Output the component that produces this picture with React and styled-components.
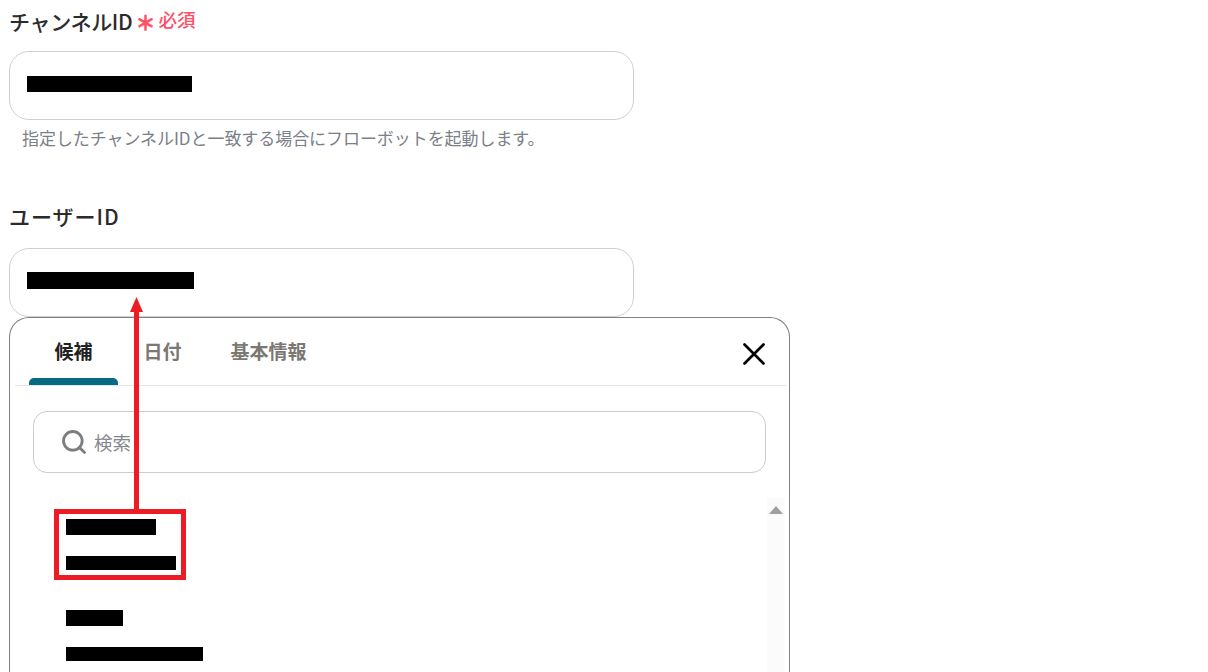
import React from "react";
import styled, { createGlobalStyle } from "styled-components";
import { Search, X } from "lucide-react";

const FONT = `"Noto Sans CJK JP", "Noto Sans", sans-serif`;

const GlobalStyle = createGlobalStyle`
  html, body {
    margin: 0;
    padding: 0;
    background: #fff;
  }
  body {
    font-family: ${FONT};
    overflow: hidden;
  }
`;

const Page = styled.div`
  position: relative;
  width: 1208px;
  height: 672px;
  overflow: hidden;
  padding: 7px 0 0 9px;
  box-sizing: border-box;
`;

const Field = styled.div`
  width: 625px;
  margin-bottom: ${(p) => p.$gap || 0}px;
`;

const LabelRow = styled.div`
  display: flex;
  align-items: center;
  height: 30px;
  margin-bottom: ${(p) => p.$mb}px;
`;

const Label = styled.div`
  font-size: 21px;
  font-weight: 500;
  color: #2b2b2b;
  letter-spacing: ${(p) => p.$spacing}px;
  position: relative;
  top: -1px;
`;

const Star = styled.span`
  color: #ff4f64;
  font-size: 20px;
  font-weight: 700;
  margin-left: 3px;
  -webkit-text-stroke: 0.6px #ff4f64;
`;

const Required = styled.span`
  color: #ff4f64;
  font-size: 18.5px;
  font-weight: 500;
  margin-left: 3px;
  position: relative;
  top: -3px;
`;

const InputBox = styled.div`
  height: 69px;
  box-sizing: border-box;
  border: 1px solid #ccd0d5;
  border-radius: 20px;
  padding: 0 0 4px 17px;
  display: flex;
  align-items: center;
  background: #fff;
`;

const Redacted = styled.span`
  display: block;
  width: ${(p) => p.$w}px;
  height: ${(p) => p.$h || 16}px;
  background: #000;
`;

const Help = styled.div`
  font-size: 17px;
  line-height: 24px;
  letter-spacing: -0.06px;
  color: #7a8088;
  padding: 6px 0 0 13px;
  white-space: nowrap;
`;

const Panel = styled.div`
  width: 781px;
  height: 420px;
  box-sizing: border-box;
  border: 1px solid #808080;
  border-bottom: 0;
  border-radius: 20px 20px 0 0;
  padding: 0 3px 0 5px;
  background: #fff;
`;

const TabBar = styled.div`
  position: relative;
  display: flex;
  height: 67px;
  border-bottom: 1px solid #e6e6e6;
  padding-left: 14px;
`;

const Tab = styled.div`
  position: relative;
  width: ${(p) => p.$w}px;
  margin-right: ${(p) => p.$mr || 0}px;
  text-align: center;
  font-size: 19px;
  font-weight: 700;
  line-height: 66px;
  height: 67px;
  color: ${(p) => (p.$active ? "#222" : "#7b7773")};

  &::after {
    content: "";
    display: ${(p) => (p.$active ? "block" : "none")};
    position: absolute;
    left: 0;
    right: 0;
    bottom: 0;
    height: 7px;
    border-radius: 5px 5px 0 0;
    background: #066a82;
  }
`;

const CloseButton = styled.div`
  position: absolute;
  right: 13px;
  top: 17px;
  display: flex;
  color: #000;
`;

const SearchBox = styled.div`
  margin: 25px 0 0 18px;
  width: 733px;
  height: 62px;
  box-sizing: border-box;
  border: 1px solid #cbcbcb;
  border-radius: 14px;
  display: flex;
  align-items: center;
  padding-left: 26px;
  gap: 6px;
  color: #7d7d7d;
`;

const Placeholder = styled.span`
  font-size: 18.5px;
  color: #84888e;
`;

const ListArea = styled.div`
  position: relative;
  display: flex;
  justify-content: space-between;
  margin-top: 25px;
  height: 300px;
`;

const Options = styled.div`
  padding: 21px 0 0 51px;
`;

const Option = styled.div`
  display: flex;
  flex-direction: column;
  gap: ${(p) => p.$gap}px;
  margin-bottom: 40px;
`;

const ScrollTrack = styled.div`
  width: 18px;
  margin-right: 1px;
  background: #fbfbfb;
  display: flex;
  justify-content: center;
  padding-top: 8px;
  box-sizing: border-box;
`;

const ScrollUp = styled.div`
  width: 0;
  height: 0;
  border-left: 7px solid transparent;
  border-right: 7px solid transparent;
  border-bottom: 8px solid #a0a0a0;
`;

const HighlightBox = styled.div`
  position: absolute;
  left: 54px;
  top: 509px;
  width: 132px;
  height: 71px;
  box-sizing: border-box;
  border: 5px solid #ed1c24;
`;

const ArrowSvg = styled.svg`
  position: absolute;
  left: 128px;
  top: 296px;
`;

export default function App() {
  return (
    <Page>
      <GlobalStyle />
      <Field $gap={52}>
        <LabelRow $mb={14}>
          <Label $spacing={-0.3}>チャンネルID</Label>
          <Star>＊</Star>
          <Required>必須</Required>
        </LabelRow>
        <InputBox>
          <Redacted $w={165} />
        </InputBox>
        <Help>指定したチャンネルIDと一致する場合にフローボットを起動します。</Help>
      </Field>
      <Field>
        <LabelRow $mb={16}>
          <Label $spacing={1}>ユーザーID</Label>
        </LabelRow>
        <InputBox>
          <Redacted $w={167} $h={17} />
        </InputBox>
      </Field>
      <Panel>
        <TabBar>
          <Tab $active $w={89} $mr={13}>候補</Tab>
          <Tab $w={63} $mr={36}>日付</Tab>
          <Tab $w={77}>基本情報</Tab>
          <CloseButton>
            <X size={38} strokeWidth={1.7} />
          </CloseButton>
        </TabBar>
        <SearchBox>
          <Search size={28} strokeWidth={2.4} />
          <Placeholder>検索</Placeholder>
        </SearchBox>
        <ListArea>
          <Options>
            <Option $gap={21}>
              <Redacted $w={90} />
              <Redacted $w={110} $h={14} />
            </Option>
            <Option $gap={21}>
              <Redacted $w={57} />
              <Redacted $w={137} $h={14} />
            </Option>
          </Options>
          <ScrollTrack>
            <ScrollUp />
          </ScrollTrack>
        </ListArea>
      </Panel>
      <HighlightBox />
      <ArrowSvg width="17" height="214" viewBox="0 0 17 214">
        <rect x="6" y="14" width="5" height="200" fill="#ed1c24" />
        <polygon points="8.5,1 15,16 2,16" fill="#ed1c24" />
      </ArrowSvg>
    </Page>
  );
}
